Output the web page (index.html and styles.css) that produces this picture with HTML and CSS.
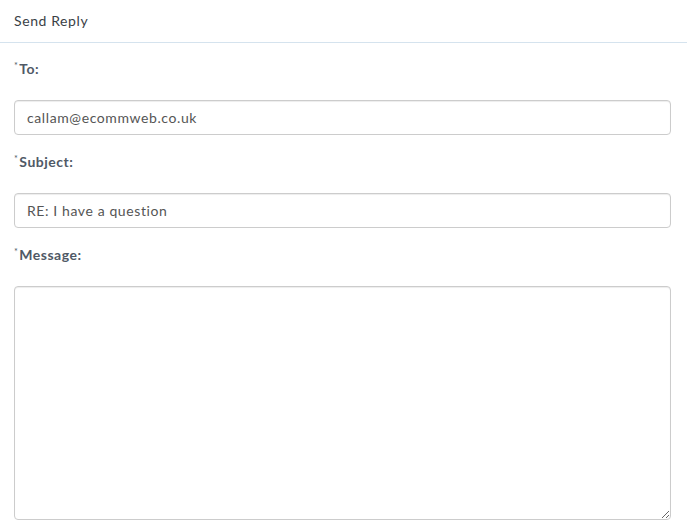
FILE: index.html
```html
<!DOCTYPE html>
<html>
<head>
<meta charset="utf-8">
<link rel="stylesheet" href="styles.css">
</head>
<body>
<div class="panel">
  <div class="panel-heading">Send Reply</div>
  <form class="panel-body">
    <div class="form-group">
      <label class="label"><sup class="req">*</sup>To:</label>
      <input class="field" type="text" value="callam@ecommweb.co.uk">
    </div>
    <div class="form-group">
      <label class="label"><sup class="req">*</sup>Subject:</label>
      <input class="field" type="text" value="RE: I have a question">
    </div>
    <div class="form-group">
      <label class="label"><sup class="req">*</sup>Message:</label>
      <textarea class="field area"></textarea>
    </div>
  </form>
</div>
</body>
</html>
```
FILE: styles.css
```css
html, body {
  margin: 0;
  padding: 0;
  background: #fff;
}
body {
  font-family: Lato, "Open Sans", sans-serif;
  font-size: 14px;
  color: #555;
  letter-spacing: 0.6px;
}
.panel-heading {
  height: 42px;
  line-height: 42px;
  padding: 0 14px;
  border-bottom: 1px solid #d5e3ee;
  color: #3a3f46;
  font-size: 14px;
}
.panel-body {
  display: flex;
  flex-direction: column;
  padding: 16px 16px 0 14px;
  gap: 17px;
}
.form-group {
  display: flex;
  flex-direction: column;
  gap: 21px;
}
.label {
  display: block;
  line-height: 20px;
  font-weight: 700;
  color: #4f5966;
  letter-spacing: 0.5px;
}
.req {
  font-size: 9px;
  font-weight: 400;
  vertical-align: top;
  line-height: 13px;
  margin-right: 1px;
}
.field {
  box-sizing: border-box;
  width: 100%;
  height: 35px;
  margin: 0;
  padding: 6px 12px;
  border: 1px solid #ccc;
  border-radius: 4px;
  box-shadow: inset 0 1px 1px rgba(0,0,0,0.075);
  font-family: inherit;
  font-size: 14px;
  letter-spacing: 0.6px;
  color: #555;
  background: #fff;
}
.area {
  height: 234px;
  display: block;
}
```
